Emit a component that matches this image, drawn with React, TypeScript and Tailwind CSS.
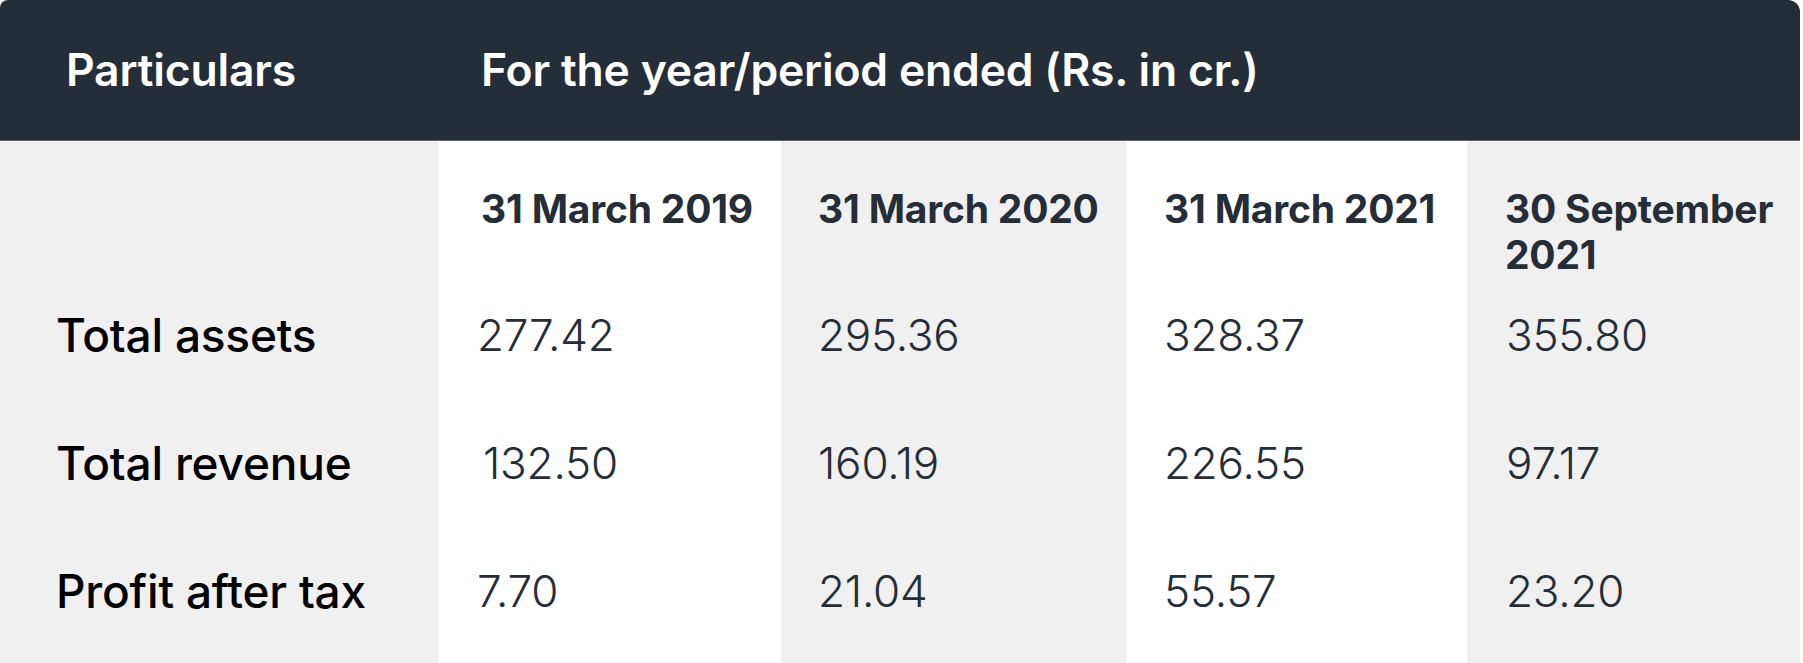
import React from "react";

const cols = [
  { w: "w-[343px]", bg: "bg-white", pl: "pl-[43px]", vpl: "pl-[39px]", head: ["31 March 2019"], vals: ["277.42", "132.50", "7.70"] },
  { w: "w-[345px]", bg: "bg-[#f0f0f0]", pl: "pl-[37px]", vpl: "pl-[37px]", head: ["31 March 2020"], vals: ["295.36", "160.19", "21.04"] },
  { w: "w-[341px]", bg: "bg-white", pl: "pl-[38px]", vpl: "pl-[38px]", head: ["31 March 2021"], vals: ["328.37", "226.55", "55.57"] },
  { w: "flex-1", bg: "bg-[#f0f0f0]", pl: "pl-[38px]", vpl: "pl-[39px]", head: ["30 September", "2021"], vals: ["355.80", "97.17", "23.20"] },
];

const labels = ["Total assets", "Total revenue", "Profit after tax"];

export default function App() {
  return (
    <div className="w-[1803px] h-[663px] bg-white overflow-hidden font-['Inter','Noto_Sans',sans-serif]">
      <div className="w-[1800px] h-[663px] flex flex-col rounded-tl-[8px] rounded-tr-[12px] overflow-hidden">
        <div className="flex items-center h-[141px] shrink-0 bg-[#252d38] border-b border-[#5d6570] text-white font-semibold text-[44.5px] tracking-[-0.2px]">
          <div className="w-[438px] pl-[66px]">Particulars</div>
          <div className="pl-[43px]">For the year/period ended (Rs. in cr.)</div>
        </div>
        <div className="flex flex-1">
          <div className="w-[438px] bg-[#f0f0f0] flex flex-col">
            <div className="h-[130px]" />
            {labels.map((l) => (
              <div key={l} className="h-[128px] flex items-center pl-[56px] text-black font-medium text-[46px] tracking-[-0.2px]">
                {l}
              </div>
            ))}
          </div>
          {cols.map((c, i) => (
            <div key={i} className={`${c.w} ${c.bg} flex flex-col`}>
              <div className={`h-[130px] pt-[45px] ${c.pl} text-[#262d37] font-bold text-[39px] leading-[46px] tracking-[-0.2px]`}>
                {c.head.map((h) => (
                  <div key={h}>{h}</div>
                ))}
              </div>
              {c.vals.map((v) => (
                <div key={v} className={`h-[128px] flex items-center ${c.vpl} text-[#262d37] font-light text-[44px] tracking-[-0.2px]`}>
                  <span className={v === "132.50" ? "ml-[6px]" : ""}>{v}</span>
                </div>
              ))}
            </div>
          ))}
        </div>
      </div>
    </div>
  );
}
